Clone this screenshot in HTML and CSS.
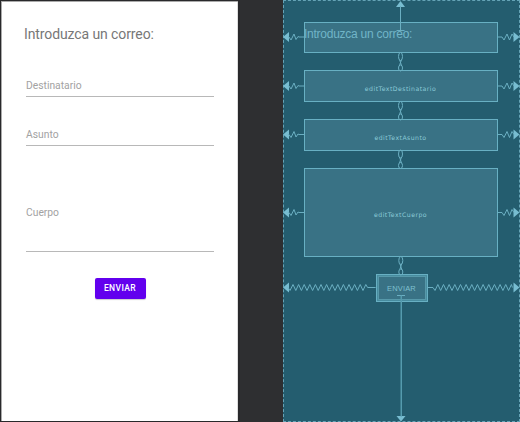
FILE: index.html
```html
<!DOCTYPE html>
<html lang="es">
<head>
<meta charset="utf-8">
<title>Correo</title>
<link rel="stylesheet" href="styles.css">
</head>
<body>
<main class="editor">
  <section class="preview">
    <h1 class="title"><span>Introduzca un correo:</span></h1>
    <div class="field"><span class="hint destinatario">Destinatario</span></div>
    <div class="field"><span class="hint asunto">Asunto</span></div>
    <div class="field field-body"><span class="hint cuerpo">Cuerpo</span></div>
    <button class="send">ENVIAR</button>
  </section>
  <section class="blueprint">
    <div class="widget heading"><span>Introduzca un correo:</span></div>
    <div class="widget edit">editTextDestinatario</div>
    <div class="widget edit">editTextAsunto</div>
    <div class="widget edit body">editTextCuerpo</div>
    <div class="widget action"><span>ENVIAR</span></div>
    <svg class="constraints" width="237" height="422" viewBox="283 0 237 422">
      <defs>
        <g id="left"><path class="tip" d="M283 0l6-5v10z"/><path d="M288 0h1l2 3 3-6 2 5.500 2-3 1 .500h6"/></g>
        <g id="right"><path class="tip" d="M519.500 0l-6-5v10z"/><path d="M498 0h4l2 3 3-6 2.500 6 2.500-6 2 3"/></g>
        <g id="chain"><ellipse cy="4" rx="2" ry="4"/><path d="M-1 7l2 6M1 7l-2 6"/><ellipse cy="15.500" rx="2" ry="3"/></g>
      </defs>
      <use href="#left" y="37"/><use href="#left" y="86"/><use href="#left" y="134.500"/><use href="#left" y="212.500"/>
      <use href="#right" y="37"/><use href="#right" y="86"/><use href="#right" y="134.500"/><use href="#right" y="212.500"/>
      <use href="#chain" x="400.500" y="52.500"/><use href="#chain" x="400.500" y="101.500"/>
      <use href="#chain" x="400.500" y="150"/><use href="#chain" x="400.800" y="256.500"/>
      <path class="tip" d="M400.500 1l-4.500 6h9z"/><path d="M400.500 6v25M396.500 30.500h8"/>
      <path class="tip" d="M401 421.500l-4.500-5.500h9z"/><path d="M397 295.500h8"/><path class="long" d="M401.250 295.500v121"/>
      <path class="tip" d="M283 287.500l6-5v10z"/>
      <path d="M288 287.500l2 3 3-6 2.800 6 2.800-6 2.800 6 2.800-6 2.800 6 2.800-6 2.800 6 2.800-6 2.800 6 2.800-6 2.800 6 2.800-6 2.800 6 2.800-6 2.800 6 2.800-6 2.800 6 2.800-6 2.800 6 2.800-6 2.800 6 2.800-6 2.800 6 2.800-6 2.800 6 2.800-6 1.800 3h8"/>
      <path class="tip" d="M519.500 287.500l-6-5v10z"/>
      <path d="M427 287.500h6l2 3 2.830-6 2.830 6 2.830-6 2.830 6 2.830-6 2.830 6 2.830-6 2.830 6 2.830-6 2.830 6 2.830-6 2.830 6 2.830-6 2.830 6 2.830-6 2.830 6 2.830-6 2.830 6 2.830-6 2.830 6 2.830-6 2.830 6 2.830-6 2.830 6 2.830-6 2.830 6 2.830-6 1 3"/>
    </svg>
  </section>
</main>
</body>
</html>
```
FILE: styles.css
```css
* { box-sizing: border-box; }
body { margin: 0; background: #2e2f31; }
.editor { width: 520px; height: 422px; display: flex; justify-content: space-between; overflow: hidden; }
.preview {
  width: 240px; height: 422px;
  border: 1px solid #29292b; border-width: 1px 2px 1px 1px;
  background: #fff; box-shadow: inset 1px 1px #aaa, inset -1px 0 #ddd;
  padding: 21px 24px 0 25px;
  display: flex; flex-direction: column; align-items: stretch;
  font-family: Roboto, sans-serif;
}
.title { margin: 0 0 19px -2px; height: 24px; line-height: 24px; font-size: 14px; font-weight: 400; color: #777; letter-spacing: -.1px; white-space: nowrap; }
.field { height: 32px; margin-bottom: 17px; border-bottom: 1px solid #b8b8b8; display: flex; align-items: center; padding-top: 11px; }
.hint { font-size: 10.300px; line-height: 14px; color: #a2a2a2; }
.field-body { height: 89px; padding: 0; margin-bottom: 26px; }
.field-body .hint { padding-top: 11px; }
.send { align-self: center; width: 51px; height: 21px; padding: 0; border: 0; border-radius: 2px; background: #6200ee; color: #fff; box-shadow: 0 1px 1px #0003; font: 500 8.500px/21px Roboto, sans-serif; letter-spacing: .4px; }
.blueprint {
  position: relative; width: 237px; height: 422px; padding: 21px 21px 0 20px;
  background: #245d6f; border: 1px dashed #65a3b6;
  display: flex; flex-direction: column; align-items: center;
  font-family: "Liberation Sans", sans-serif;
}
.widget { width: 194px; background: #397285; border: 1px solid #68b0c3; display: flex; align-items: center; justify-content: center; flex-shrink: 0; }
.heading { height: 31px; margin-bottom: 17px; justify-content: flex-start; font-size: 12px; line-height: 24px; color: #71b5c8; white-space: nowrap; }
.heading span { margin: -7px 0 0 -1px; letter-spacing: -.25px; }
.edit { height: 32px; margin-bottom: 17px; padding: 5px 1px 0 0; font: 6.200px/10px "DejaVu Sans", sans-serif; letter-spacing: .45px; color: #8bcad7; }
.body { height: 89px; }
.action { width: 52px; height: 28px; margin-left: 1px; box-shadow: inset 0 0 0 1px #478c9f, inset 0 0 0 2px #5799aa; font-size: 7.500px; letter-spacing: .15px; color: #7fc0cf; }
.constraints { position: absolute; left: -1px; top: -1px; fill: none; stroke: #6bafc2; stroke-width: 1; }
.tip { fill: #78bdd1; stroke: none; }
.long { stroke-width: 1.500; stroke: #559bae; }
```
